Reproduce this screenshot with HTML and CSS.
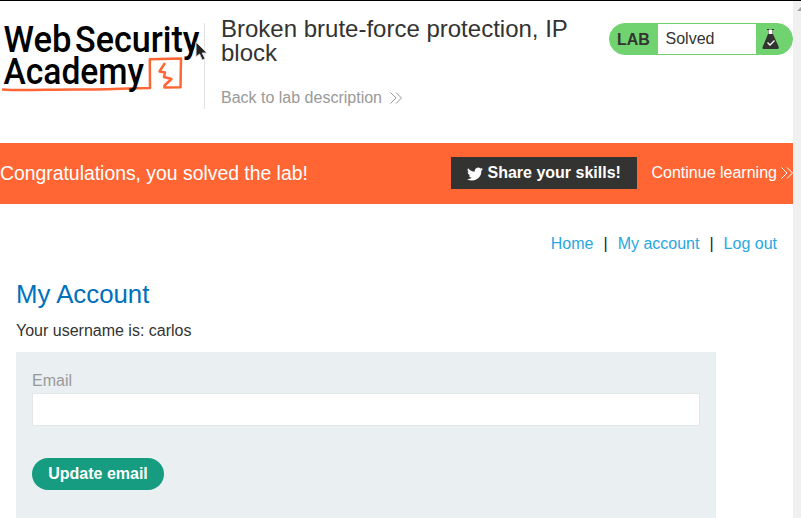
FILE: index.html
```html
<!DOCTYPE html>
<html lang="en">
<head>
<meta charset="utf-8">
<title>Broken brute-force protection, IP block</title>
<link rel="stylesheet" href="styles.css">
</head>
<body>
<div class="window">
  <div class="page">
    <header class="lab-header">
      <svg class="logo" width="204" height="86" viewBox="0 16 204 86" role="img" aria-label="Web Security Academy">
        <g class="logo-text">
          <text x="3.500" y="51.7" textLength="68" lengthAdjust="spacingAndGlyphs">Web</text>
          <text x="75" y="51.7" textLength="124.500" lengthAdjust="spacingAndGlyphs">Security</text>
        </g>
        <path class="logo-line" d="M2 89.500C20 91 45 89.500 75 89.500S130 88 150 88L149.800 59.200L181 58.500L180.500 87.200L164.500 87.500L164.500 85.500L171.500 79L164 77L165 72.500L159.500 71.500L165 63"/>
        <text class="logo-text" x="3.500" y="84.200" textLength="140.500" lengthAdjust="spacingAndGlyphs">Academy</text>
      </svg>
      <div class="title-block">
        <h2>Broken brute-force protection, IP block</h2>
        <a class="back" href="#">Back to lab description
          <svg class="chevrons" width="12" height="12" viewBox="0 0 12 12"><path d="M.5.500L6 6L.5 11.500M6 .500L11.500 6L6 11.500"/></svg></a>
      </div>
      <div class="status">
        <span class="status-tag">LAB</span>
        <span class="status-value">Solved</span>
        <span class="status-icon">
          <svg width="18" height="22" viewBox="0 0 18 22"><path fill="#fff" stroke="#666" stroke-width=".6" d="M6.500 1.500h4v5h-4z"/><path fill="#333332" d="M5 1h2v1H5zM10 1h2v1h-2zM6 6h5l5.800 13q.4 2-1.300 2h-14Q.2 21 .6 19z"/><path class="tick" d="M5.500 14.500l2.500 2.500 4.500-4.500"/></svg>
        </span>
      </div>
    </header>
    <section class="banner">
      <h4>Congratulations, you solved the lab!</h4>
      <a class="share" href="#"><svg width="16" height="16" viewBox="0 0 24 24"><path fill="#fff" d="M24 4.600a10 10 0 0 1-2.800.8 5 5 0 0 0 2.100-2.700 10 10 0 0 1-3.100 1.200 4.900 4.900 0 0 0-8.400 4.500A14 14 0 0 1 1.700 3.200a4.900 4.900 0 0 0 1.500 6.500A5 5 0 0 1 1 9.100v.1a4.900 4.900 0 0 0 3.900 4.800 5 5 0 0 1-2.200.1 4.900 4.900 0 0 0 4.600 3.400A10 10 0 0 1 0 19.500a14 14 0 0 0 21.500-12.400A10 10 0 0 0 24 4.600z"/></svg><span>Share your skills!</span></a>
      <a class="continue" href="#">Continue learning<svg class="chevrons" width="12" height="12" viewBox="0 0 12 12"><path d="M.5.500L6 6L.5 11.500M6 .500L11.500 6L6 11.500"/></svg></a>
    </section>
    <main>
      <nav><a href="#">Home</a><span>|</span><a href="#">My account</a><span>|</span><a href="#">Log out</a></nav>
      <h1>My Account</h1>
      <p>Your username is: carlos</p>
      <form>
        <label for="email">Email</label>
        <input id="email" type="email">
        <button type="button">Update email</button>
      </form>
    </main>
  </div>
  <div class="scrollbar"><svg width="8" height="14" viewBox="0 0 8 14"><path fill="#a3a3a3" d="M8 6v4H4z"/></svg></div>
  <svg class="cursor" width="14" height="21" viewBox="0 0 14 21"><path fill="#222" stroke="#ddd" d="M1 1v15l3.500-3 2.800 6 2.700-1.300-2.800-5.700H12z"/></svg>
</div>
</body>
</html>
```

FILE: styles.css
```css
* { box-sizing: border-box; }
body { margin: 0; background: #fff; color: #333332; font: 16px/20px "Liberation Sans", Arial, sans-serif; overflow: hidden; }
a { text-decoration: none; }
h1, h2, h4, p { margin: 0; font-weight: 400; }
.window { position: relative; display: flex; height: 518px; border-top: 1px solid #000; overflow: hidden; }
.page { width: 793px; overflow: hidden; }
.scrollbar { width: 8px; background: #f0f0f0; }
.scrollbar svg { display: block; }
.cursor { position: absolute; left: 195px; top: 40px; }

.lab-header { display: flex; height: 142px; padding-top: 15px; }
.logo { flex: none; overflow: visible; }
.logo-text { font: 500 37.500px Roboto, sans-serif; fill: #000; }
.logo-line { fill: none; stroke: #ff6633; stroke-width: 2.5; stroke-linejoin: round; }
.title-block { width: 405px; height: 86px; margin-top: 7px; padding-left: 16px; border-left: 1px solid #e3e3e3; }
.title-block h2 { width: 360px; margin-top: -6px; font-size: 24px; line-height: 24px; }
.back { display: flex; align-items: center; gap: 8.500px; margin-top: 23px; color: #999; }
.chevrons { fill: none; stroke: currentColor; stroke-width: 1; }
.status { display: flex; width: 184px; height: 32px; margin-top: 7px; border: 1px solid #70d36f; border-radius: 16px; background: #70d36f; line-height: 30px; overflow: hidden; }
.status-tag { width: 48px; padding: 1px 0 0 7px; font-weight: 700; }
.status-value { width: 98px; padding-left: 7.500px; background: #fff; }
.status-icon { padding: 4px 0 0 6px; }
.status-icon svg { display: block; }
.tick { fill: none; stroke: #fff; stroke-width: 1.3; }

.banner { display: flex; align-items: center; height: 61px; padding-bottom: 2px; background: #ff6633; color: #fff; }
.banner > * { flex: none; }
.banner h4 { width: 451px; padding-top: 1px; font-size: 19.360px; }
.banner a { display: flex; align-items: center; color: #fff; }
.share { width: 186px; height: 32px; margin-right: 14.500px; padding-left: 16px; gap: 4.500px; background: #333332; font-weight: 700; white-space: nowrap; }
.share svg { margin-top: 2px; }
.continue { gap: 4.500px; white-space: nowrap; }
.continue svg { flex: none; }

main { padding: 30px 16px 0; }
nav { display: flex; justify-content: flex-end; gap: 10px; }
nav a { color: #29a7df; }
nav span { color: #222; }
h1 { margin-top: 25px; color: #0071bc; font-size: 25.800px; line-height: 30px; }
main p { margin-top: 12px; }
form { display: flex; flex-direction: column; align-items: flex-start; width: 700px; height: 200px; margin-top: 11px; padding: 19px 16px; background: #eaeff2; }
label { color: #999; }
input { width: 668px; height: 33px; margin-top: 2px; padding: 0 8px; border: 1px solid #e3e6e6; background: #fff; font: inherit; }
button { width: 132px; height: 32px; margin-top: 32px; padding: 0; border: 0; border-radius: 16px; background: #169c80; color: #fff; font: 700 16px "Liberation Sans", Arial, sans-serif; }
```
